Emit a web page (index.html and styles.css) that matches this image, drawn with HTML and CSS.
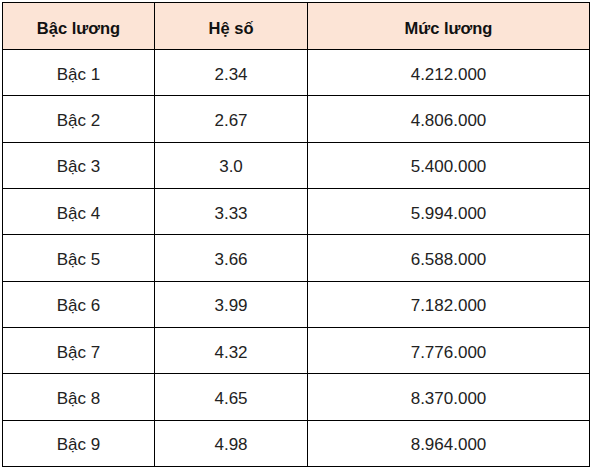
FILE: index.html
```html
<!DOCTYPE html>
<html lang="vi">
<head>
<meta charset="utf-8">
<link rel="stylesheet" href="styles.css">
</head>
<body>
<table class="salary">
  <colgroup>
    <col class="c1"><col class="c2"><col class="c3">
  </colgroup>
  <thead>
    <tr><th>Bậc lương</th><th>Hệ số</th><th>Mức lương</th></tr>
  </thead>
  <tbody>
    <tr><td>Bậc 1</td><td>2.34</td><td>4.212.000</td></tr>
    <tr><td>Bậc 2</td><td>2.67</td><td>4.806.000</td></tr>
    <tr><td>Bậc 3</td><td>3.0</td><td>5.400.000</td></tr>
    <tr><td>Bậc 4</td><td>3.33</td><td>5.994.000</td></tr>
    <tr><td>Bậc 5</td><td>3.66</td><td>6.588.000</td></tr>
    <tr><td>Bậc 6</td><td>3.99</td><td>7.182.000</td></tr>
    <tr><td>Bậc 7</td><td>4.32</td><td>7.776.000</td></tr>
    <tr><td>Bậc 8</td><td>4.65</td><td>8.370.000</td></tr>
    <tr><td>Bậc 9</td><td>4.98</td><td>8.964.000</td></tr>
  </tbody>
</table>
</body>
</html>
```
FILE: styles.css
```css
html, body {
  margin: 0;
  padding: 0;
  background: #ffffff;
}
body {
  padding: 2px;
}
.salary {
  border-collapse: collapse;
  width: 587px;
  table-layout: fixed;
  font-family: "Liberation Sans", Arial, sans-serif;
  font-size: 17px;
  color: #222222;
}
.c1 { width: 152px; }
.c2 { width: 153px; }
.c3 { width: 282px; }
.salary th,
.salary td {
  border: 1px solid #000000;
  text-align: center;
  vertical-align: middle;
  padding: 4px 0 0 0;
  line-height: 20px;
}
.salary thead tr {
  height: 47px;
}
.salary th {
  background: #fce4d6;
  font-weight: bold;
  font-size: 16.5px;
  color: #111111;
}
.salary tbody tr {
  height: 46.33px;
}
```
